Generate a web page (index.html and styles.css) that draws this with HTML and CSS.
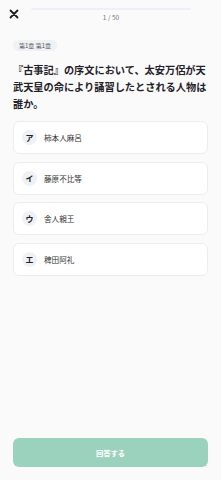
FILE: index.html
```html
<!DOCTYPE html>
<html lang="ja">
<head>
  <meta charset="UTF-8" />
  <meta name="viewport" content="width=device-width, initial-scale=1.0"/>
  <title>クイズ</title>
  <link rel="stylesheet" href="styles.css">
</head>
<body>
  <div class="topbar">
    <svg class="close" width="10" height="10" viewBox="0 0 10 10">
      <path d="M1.5 1.5 L8.5 8.5 M8.5 1.5 L1.5 8.5" stroke="#1f1f1f" stroke-width="1.8" stroke-linecap="round"/>
    </svg>
    <div class="progress">
      <div class="track"></div>
      <div class="counter">1 / 50</div>
    </div>
  </div>

  <main class="content">
    <span class="chip">第1章 第1章</span>
    <h1 class="question">『古事記』の序文において、太安万侶が天武天皇の命により誦習したとされる人物は誰か。</h1>

    <div class="options">
      <div class="option"><span class="badge">ア</span><span class="label">柿本人麻呂</span></div>
      <div class="option"><span class="badge">イ</span><span class="label">藤原不比等</span></div>
      <div class="option"><span class="badge">ウ</span><span class="label">舎人親王</span></div>
      <div class="option"><span class="badge">エ</span><span class="label">稗田阿礼</span></div>
    </div>
  </main>

  <button class="submit" type="button">回答する</button>
</body>
</html>
```

FILE: styles.css
```css
body {
  margin: 0;
  height: 480px;
  display: flex;
  flex-direction: column;
  background-color: #fafafa;
  font-family: "Noto Sans CJK JP", "Noto Sans", sans-serif;
  color: #222;
}
.topbar {
  display: flex;
  align-items: flex-start;
  gap: 12px;
  padding: 8px 30px 0 9px;
}
.close {
  margin-top: 1px;
  flex-shrink: 0;
}
.progress {
  flex: 1;
  display: flex;
  flex-direction: column;
  align-items: center;
  gap: 2.5px;
}
.track {
  width: 100%;
  height: 2px;
  border-radius: 1px;
  background-color: #edf0f6;
}
.counter {
  font-size: 6.5px;
  line-height: 8px;
  color: #777;
}
.content {
  display: flex;
  flex-direction: column;
  align-items: flex-start;
  padding: 0 13px;
}
.chip {
  margin-top: 19.5px;
  padding: 0 6px;
  height: 11px;
  line-height: 11px;
  font-size: 6px;
  color: #555;
  background-color: #eef1f6;
  border-radius: 6px;
}
.question {
  margin: 9.5px 0 0;
  font-size: 10.2px;
  line-height: 17px;
  font-weight: 700;
  color: #1f2329;
}
.options {
  align-self: stretch;
  display: flex;
  flex-direction: column;
  gap: 7.5px;
  margin-top: 9.5px;
}
.option {
  height: 33px;
  box-sizing: border-box;
  display: flex;
  align-items: center;
  gap: 7px;
  padding: 0 8px;
  background: #fff;
  border: 1px solid #ededed;
  border-radius: 6px;
}
.badge {
  width: 15px;
  height: 15px;
  border-radius: 50%;
  background-color: #eef1f6;
  display: flex;
  align-items: center;
  justify-content: center;
  font-size: 8px;
  font-weight: 700;
  color: #222;
}
.label {
  font-size: 7.6px;
  color: #333;
}
.submit {
  margin: auto 13px 13px;
  height: 29px;
  border: none;
  border-radius: 6px;
  background-color: #9bd2bd;
  color: #fff;
  font-family: inherit;
  font-size: 7.3px;
  font-weight: 700;
}
```
